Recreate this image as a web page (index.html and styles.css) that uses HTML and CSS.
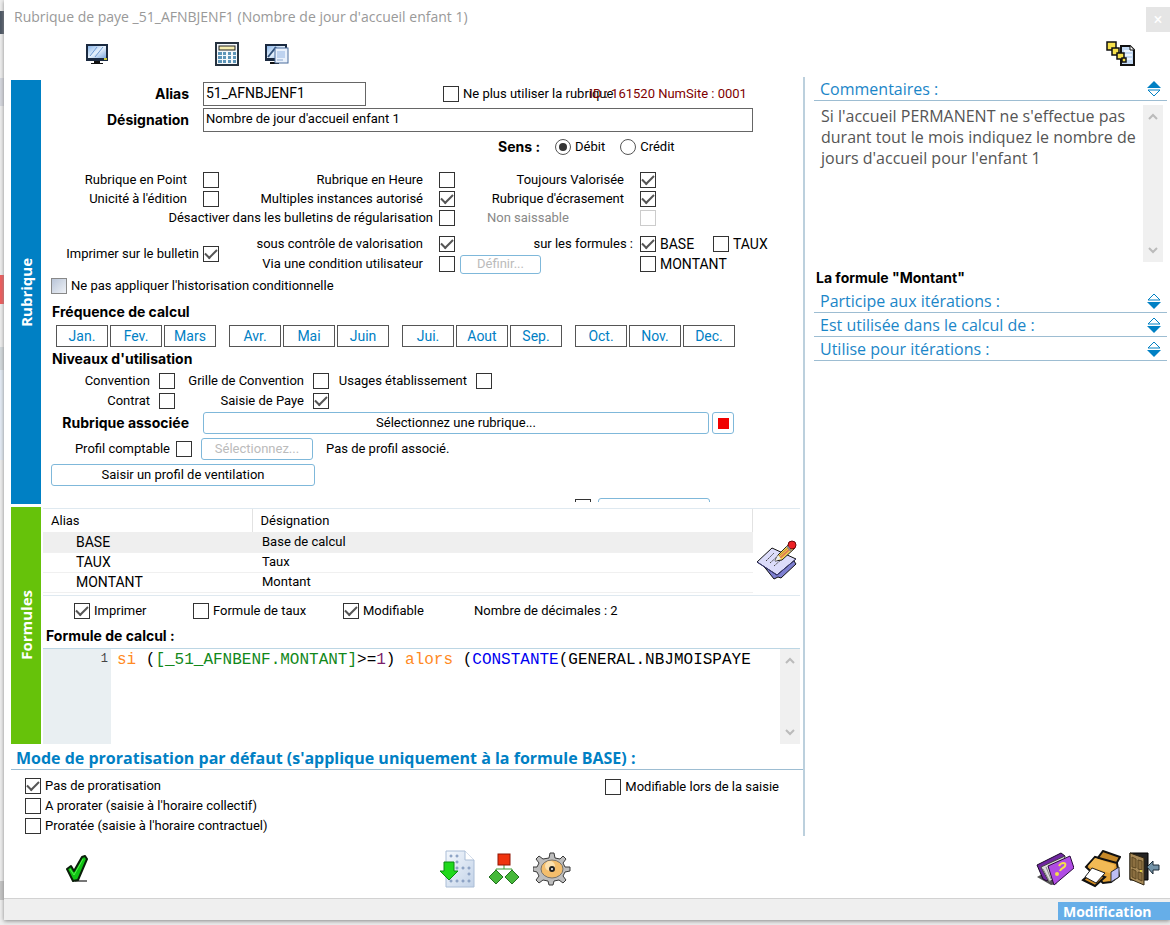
FILE: index.html
```html
<!DOCTYPE html>
<html lang="fr">
<head>
<meta charset="utf-8">
<title>Rubrique de paye</title>
<link rel="stylesheet" href="styles.css">
</head>
<body>
<div class="backdrop"></div>
<div class="window">
  <header class="titlebar">
    <h1 class="title">Rubrique de paye _51_AFNBJENF1 (Nombre de jour d'accueil enfant 1)</h1>
    <button class="close" aria-label="Fermer">×</button>
  </header>

  <nav class="toolbar">
    <button class="icon tool-screen" aria-label="Écran">
      <svg width="24" height="22" viewBox="0 0 24 22"><defs><linearGradient id="scr" x1="0" y1="0" x2="1" y2="1"><stop offset="0" stop-color="#8db8ea"/><stop offset=".5" stop-color="#e6f1fc"/><stop offset="1" stop-color="#7fa9dd"/></linearGradient></defs><rect x="1" y="1" width="22" height="17" fill="#1b2a40"/><rect x="3" y="3" width="18" height="12" fill="url(#scr)"/><path d="M5 13l7-9M10 14l8-10" stroke="#6f9bd2"/><rect x="19" y="15" width="3" height="2" fill="#c8c83c"/><path d="M9 18h6v2h3v1H6v-1h3z" fill="#111"/></svg>
    </button>
    <button class="icon tool-calc" aria-label="Calculatrice">
      <svg width="24" height="24" viewBox="0 0 24 24"><rect x="1" y="1" width="22" height="22" fill="#f4f8fb" stroke="#26323f" stroke-width="2"/><rect x="4" y="4" width="16" height="4" fill="#f6eeb0" stroke="#222" stroke-width="1"/><g fill="#5d95b8"><path d="M3 10h4v3H3zM8 10h3v3H8zM13 10h3v3h-3zM18 10h3v3h-3zM3 14h4v3H3zM8 14h3v3H8zM13 14h3v3h-3zM18 14h3v3h-3zM3 18h4v3H3zM8 18h3v3H8zM13 18h3v3h-3zM18 18h3v3h-3z"/></g></svg>
    </button>
    <button class="icon" aria-label="Écran et document">
      <svg width="26" height="22" viewBox="0 0 26 22"><rect x="1" y="1" width="22" height="17" fill="#1b2a40"/><rect x="3" y="3" width="18" height="12" fill="url(#scr)"/><path d="M4 14l8-10" stroke="#31527c" stroke-width="2"/><path d="M6 19h9v2H6z" fill="#111"/><rect x="11" y="5" width="13" height="15" fill="#e9f1fc" stroke="#4b6c9c"/><path d="M13 8h8v7h-8z" fill="#bed3f0"/><path d="M13 17h6" stroke="#8ca9d0"/></svg>
    </button>
    <button class="icon tool-export" aria-label="Transférer">
      <svg width="30" height="26" viewBox="0 0 30 26"><path d="M15 5h9l4 4v15H15z" fill="#c3d9f3" stroke="#111" stroke-width="2"/><path d="M18 10h8M18 14h8M18 18h8" stroke="#eef6ff" stroke-width="2"/><path d="M24 5v4h4" fill="#fff" stroke="#111"/><g fill="#f7e14c" stroke="#111" stroke-width="1.500"><rect x="1" y="1" width="9" height="8"/><rect x="6" y="7" width="7" height="7"/><rect x="11" y="12" width="7" height="6"/><rect x="16" y="17" width="4" height="4"/></g></svg>
    </button>
  </nav>

  <main class="main">
    <div class="left">
      <section class="section">
        <div class="tab tab-blue"><span>Rubrique</span></div>
        <div class="form">
          <div class="row row-alias">
            <label class="strong caption" for="alias">Alias</label>
            <input class="field alias" id="alias" type="text" value="51_AFNBJENF1">
            <label class="check unused"><input type="checkbox"><span>Ne plus utiliser la rubrique</span></label>
            <span class="ident">ID : 161520 NumSite : 0001</span>
          </div>
          <div class="row row-name">
            <label class="strong caption" for="designation">Désignation</label>
            <input class="field name" id="designation" type="text" value="Nombre de jour d'accueil enfant 1">
          </div>
          <div class="row row-sens">
            <span class="strong">Sens :</span>
            <label class="check"><input type="radio" name="sens" checked><span>Débit</span></label>
            <label class="check"><input type="radio" name="sens"><span>Crédit</span></label>
          </div>

          <div class="options">
            <label for="o1">Rubrique en Point</label><input type="checkbox" id="o1">
            <label for="o2">Rubrique en Heure</label><input type="checkbox" id="o2">
            <label for="o3">Toujours Valorisée</label><input type="checkbox" id="o3" checked>
            <label class="first" for="o4">Unicité à l'édition</label><input type="checkbox" id="o4">
            <label for="o5">Multiples instances autorisé</label><input type="checkbox" id="o5" checked>
            <label for="o6">Rubrique d'écrasement</label><input type="checkbox" id="o6" checked>
            <label class="wide" for="o7">Désactiver dans les bulletins de régularisation</label><input type="checkbox" id="o7">
            <label class="muted" for="o8">Non saissable</label><input type="checkbox" id="o8" disabled>
          </div>

          <div class="options printing">
            <label class="tall near" for="p1">Imprimer sur le bulletin</label><input class="tall" type="checkbox" id="p1" checked>
            <label for="p2">sous contrôle de valorisation</label><input type="checkbox" id="p2" checked>
            <span class="caption-right">sur les formules :</span>
            <div class="bases">
              <label class="check base"><input type="checkbox" checked><span>BASE</span></label>
              <label class="check"><input type="checkbox"><span>TAUX</span></label>
            </div>
            <label for="p3">Via une condition utilisateur</label><input type="checkbox" id="p3">
            <button class="btn define" disabled>Définir...</button>
            <div class="bases"><label class="check"><input type="checkbox"><span>MONTANT</span></label></div>
          </div>

          <div class="row row-histo">
            <label class="check"><input class="tri" type="checkbox"><span>Ne pas appliquer l'historisation conditionnelle</span></label>
          </div>

          <h2 class="strong heading frequency">Fréquence de calcul</h2>
          <div class="months">
            <div class="quarter"><button>Jan.</button><button>Fev.</button><button>Mars</button></div>
            <div class="quarter"><button>Avr.</button><button>Mai</button><button>Juin</button></div>
            <div class="quarter"><button>Jui.</button><button>Aout</button><button>Sep.</button></div>
            <div class="quarter"><button>Oct.</button><button>Nov.</button><button>Dec.</button></div>
          </div>

          <h2 class="strong heading levels-title">Niveaux d'utilisation</h2>
          <div class="levels">
            <label for="n1">Convention</label><input type="checkbox" id="n1">
            <label for="n2">Grille de Convention</label><input type="checkbox" id="n2">
            <label for="n3">Usages établissement</label><input type="checkbox" id="n3">
            <label for="n4">Contrat</label><input type="checkbox" id="n4">
            <label for="n5">Saisie de Paye</label><input type="checkbox" id="n5" checked>
          </div>

          <div class="row row-linked">
            <span class="strong caption">Rubrique associée</span>
            <button class="btn choose">Sélectionnez une rubrique...</button>
            <button class="btn clear" aria-label="Effacer"><i></i></button>
          </div>
          <div class="row row-profile">
            <label class="profile-label" for="pc">Profil comptable</label><input type="checkbox" id="pc">
            <button class="btn pick" disabled>Sélectionnez...</button>
            <span>Pas de profil associé.</span>
          </div>
          <div class="row row-split"><button class="btn split">Saisir un profil de ventilation</button></div>
          <div class="cropped"><input type="checkbox" aria-label="Définir"><button class="btn pick" disabled>Définir...</button></div>
        </div>
      </section>

      <section class="section formulas">
        <div class="tab tab-green"><span>Formules</span></div>
        <div class="formula-body">
          <div class="list">
            <table class="table">
              <thead><tr><th class="col-alias">Alias</th><th>Désignation</th></tr></thead>
              <tbody>
                <tr class="selected"><td>BASE</td><td>Base de calcul</td></tr>
                <tr><td>TAUX</td><td>Taux</td></tr>
                <tr><td>MONTANT</td><td>Montant</td></tr>
              </tbody>
            </table>
            <button class="icon edit" aria-label="Modifier">
              <svg width="42" height="42" viewBox="0 0 42 42"><path d="M6 24l12 15 4-2 3 1 15-14-2-3z" fill="#7d7fd0" stroke="#111"/><path d="M1 22L16 8l24 11-19 16z" fill="#dcdcfa" stroke="#111"/><path d="M1 22l20 13 19-16" fill="none" stroke="#3a3a78"/><path d="M10 21l8-8M14 23l9-8M18 26l9-8" stroke="#444" stroke-dasharray="2 1"/><path d="M19 21l3-6L34 3l5 5-13 12z" fill="#f3d650" stroke="#222"/><path d="M24 18L36 7" stroke="#e08050" stroke-width="2"/><path d="M23 16L35 5" stroke="#ba792a"/><path d="M19 21l3-6 3 4z" fill="#eee"/><circle cx="36" cy="5" r="4" fill="#ed2024" stroke="#6d0808"/><path d="M31 6l4 5" stroke="#8a8a8a" stroke-width="2"/></svg>
            </button>
          </div>
          <div class="flags">
            <label class="check flag-print"><input type="checkbox" checked><span>Imprimer</span></label>
            <label class="check flag-rate"><input type="checkbox"><span>Formule de taux</span></label>
            <label class="check flag-edit"><input type="checkbox" checked><span>Modifiable</span></label>
            <span>Nombre de décimales : 2</span>
          </div>
          <h2 class="strong heading calc-title">Formule de calcul :</h2>
          <div class="editor">
            <div class="gutter">1</div>
            <pre class="code"><span class="kw">si</span> (<span class="ref">[_51_AFNBENF.MONTANT]</span>&gt;=<span class="num">1</span>) <span class="kw">alors</span> (<span class="fn">CONSTANTE</span>(GENERAL.NBJMOISPAYE</pre>
            <div class="scroll"><svg width="10" height="7" viewBox="0 0 10 7"><path d="M1 6l4-4 4 4"/></svg><svg width="10" height="7" viewBox="0 0 10 7"><path d="M1 1l4 4 4-4"/></svg></div>
          </div>
        </div>
      </section>

      <section class="prorata">
        <h2 class="prorata-title">Mode de proratisation par défaut (s'applique uniquement à la formule BASE) :</h2>
        <div class="prorata-body">
          <div class="prorata-list">
            <label class="check"><input type="checkbox" checked><span>Pas de proratisation</span></label>
            <label class="check"><input type="checkbox"><span>A prorater (saisie à l'horaire collectif)</span></label>
            <label class="check"><input type="checkbox"><span>Proratée (saisie à l'horaire contractuel)</span></label>
          </div>
          <label class="check editable"><input type="checkbox"><span>Modifiable lors de la saisie</span></label>
        </div>
      </section>
    </div>

    <aside class="side">
      <h2 class="fold">Commentaires :
        <svg width="14" height="16" viewBox="0 0 14 16"><path d="M0 7l7-7 7 7z" fill="#0080c4"/><path d="M1 9h12l-6 6z" fill="#fff" stroke="#0080c4"/></svg></h2>
      <div class="comment">
        <p>Si l'accueil PERMANENT ne s'effectue pas durant tout le mois indiquez le nombre de jours d'accueil pour l'enfant 1</p>
        <div class="scroll"><svg width="10" height="7" viewBox="0 0 10 7"><path d="M1 6l4-4 4 4"/></svg><svg width="10" height="7" viewBox="0 0 10 7"><path d="M1 1l4 4 4-4"/></svg></div>
      </div>
      <h2 class="strong heading side-title">La formule "Montant"</h2>
      <h3 class="fold">Participe aux itérations :
        <svg width="14" height="16" viewBox="0 0 14 16"><path d="M1 7h12L7 1z" fill="#fff" stroke="#0080c4"/><path d="M0 9l7 7 7-7z" fill="#0080c4"/></svg></h3>
      <h3 class="fold">Est utilisée dans le calcul de :
        <svg width="14" height="16" viewBox="0 0 14 16"><path d="M1 7h12L7 1z" fill="#fff" stroke="#0080c4"/><path d="M0 9l7 7 7-7z" fill="#0080c4"/></svg></h3>
      <h3 class="fold">Utilise pour itérations :
        <svg width="14" height="16" viewBox="0 0 14 16"><path d="M1 7h12L7 1z" fill="#fff" stroke="#0080c4"/><path d="M0 9l7 7 7-7z" fill="#0080c4"/></svg></h3>
    </aside>
  </main>

  <div class="actions">
    <div class="group group-left">
      <button class="icon" aria-label="Valider">
        <svg width="22" height="28" viewBox="0 0 22 28"><path d="M9 26h12" stroke="#777" stroke-width="2"/><path d="M1 14l4-3 3 5L16 2l3-1 2 3-9 21-5 1z" fill="#10c414" stroke="#0a1f0a" stroke-width="2" stroke-linejoin="round"/><path d="M4 14l4 6L17 4" fill="none" stroke="#54ef4c" stroke-width="1"/></svg>
      </button>
    </div>
    <div class="group group-middle">
      <button class="icon" aria-label="Importer">
        <svg width="36" height="38" viewBox="0 0 36 38"><defs><linearGradient id="pg" x1="0" y1="0" x2="1" y2="1"><stop offset="0" stop-color="#f4f8fd"/><stop offset="1" stop-color="#c3d3e8"/></linearGradient></defs><path d="M7 1h19l9 9v27H7z" fill="url(#pg)" stroke="#aabdd6"/><path d="M26 1v9h9" fill="#fff" stroke="#aabdd6"/><g fill="#fff" stroke="#6c88b3"><circle cx="12" cy="6" r="1"/><circle cx="18" cy="6" r="1"/><circle cx="18" cy="12" r="1"/><circle cx="24" cy="18" r="1"/><circle cx="30" cy="18" r="1"/><circle cx="18" cy="18" r="1"/><circle cx="30" cy="24" r="1"/><circle cx="12" cy="31" r="1"/><circle cx="18" cy="31" r="1"/><circle cx="24" cy="31" r="1"/><circle cx="30" cy="31" r="1"/></g><path d="M5 12h10v9h4L10 30 1 21h4z" fill="#1fd91b" stroke="#0c8a10"/></svg>
      </button>
      <button class="icon" aria-label="Arborescence">
        <svg width="30" height="32" viewBox="0 0 30 32"><path d="M15 11v5M7 22v-6h16v6" fill="none" stroke="#3b9c37" stroke-width="1"/><rect x="9" y="1" width="12" height="11" fill="#f0330e" stroke="#8f1605"/><path d="M7 17l7 7-7 7-7-7zM23 17l7 7-7 7-7-7z" fill="#46b83a" stroke="#23701f"/></svg>
      </button>
      <button class="icon" aria-label="Paramètres">
        <svg width="38" height="34" viewBox="0 0 38 34"><g fill="#bdbdbd" stroke="#3a3a3a"><path d="M16 6l1-5h4l1 5 5 1 3-3 3 3-3 4 2 4 5 0v4l-5 1-2 4 3 4-3 3-4-3-5 1-1 4h-4l-1-4-5-1-4 3-3-3 3-4-2-4-4-1v-4l4 0 2-4-3-4 3-3 4 3z"/></g><ellipse cx="19" cy="17" rx="11" ry="9" fill="#f4be6c" stroke="#77726a" stroke-width="1"/><circle cx="17" cy="14" r="5" fill="#fbe0ae"/><circle cx="19" cy="17" r="2" fill="#fff" stroke="#222" stroke-width="2"/></svg>
      </button>
    </div>
    <div class="group group-right">
      <button class="icon" aria-label="Aide">
        <svg width="38" height="34" viewBox="0 0 38 34"><path d="M1 25l7-4 13 11-6 1z" fill="#555"/><path d="M1 13L25 1l4 3-18 25-4-2z" fill="#6f26a0" stroke="#1a0828"/><path d="M5 15L29 4l-3 18-13 8z" fill="#ddd" stroke="#444"/><path d="M7 17l7 13M10 15l5 12" stroke="#888"/><path d="M12 14L34 4l4 12-20 17z" fill="#b04ce4" stroke="#2b0b3d"/><path d="M23 14c2-4 8-4 6 0-1 2-4 2-5 5" fill="none" stroke="#f4e04a" stroke-width="2"/><circle cx="21" cy="22" r="2" fill="#f4e04a"/></svg>
      </button>
      <button class="icon" aria-label="Imprimer">
        <svg width="40" height="38" viewBox="0 0 40 38"><path d="M16 9l6-8 17 6-5 9z" fill="#c58828" stroke="#111" stroke-width="2"/><path d="M5 17l9-10 22 6 2 13-8 6-8 1z" fill="#e5a336" stroke="#111" stroke-width="2"/><path d="M14 8l20 7-3 9-24-8z" fill="#f2ba55"/><path d="M30 22l8-5v10l-8 5z" fill="#bdbdf4" stroke="#333"/><path d="M2 30l12 6 10-9-13-5z" fill="#d28a20" stroke="#111" stroke-width="2"/><path d="M4 27l7-9 13 5-9 10z" fill="#fff" stroke="#222"/></svg>
      </button>
      <button class="icon" aria-label="Quitter">
        <svg width="32" height="36" viewBox="0 0 32 36"><path d="M2 2h18v27H2z" fill="#242424" stroke="#000"/><path d="M2 2l14 5v27L2 28z" fill="#a88a58" stroke="#2f240f"/><path d="M4 6l4 2v9l-4-1zM10 9l4 1v9l-4-1zM4 18l4 2v8l-4-2zM10 21l4 1v8l-4-2z" fill="#8c6f40" stroke="#5d4823"/><circle cx="13" cy="20" r="1" fill="#f2e63a"/><path d="M19 16l6-6v4h6v5h-6v4z" fill="#7393a8" stroke="#1c2b36"/></svg>
      </button>
    </div>
  </div>

  <footer class="status"><span class="mode">Modification</span></footer>
</div>
</body>
</html>
```
FILE: styles.css
```css
* { box-sizing: border-box; }

body {
  margin: 0;
  min-height: 100vh;
  display: grid;
  grid-template-columns: 4px minmax(0, 1fr);
  background: #ececec;
  color: #000;
  font: 13px/18px Roboto, "Liberation Sans", sans-serif;
}

button, input { font: inherit; color: inherit; }
button { padding: 0; cursor: pointer; }
h1, h2, h3, p, pre { margin: 0; font-size: inherit; font-weight: normal; }

.backdrop {
  background: linear-gradient(#eee 0 11px, #4b5563 11px 34px, #eee 34px 78px, #d5d7de 78px 106px, #eee 106px 275px, #f05a5a 275px 304px, #eee 304px 347px, #d3d9dc 347px 370px, #e3ebf5 370px 460px, #eee 460px 881px, #c4c4c4 881px 900px, #eee 900px);
}

.window {
  display: flex;
  flex-direction: column;
  margin-bottom: 6px;
  background: #fff;
  box-shadow: 0 1px 4px #888;
}

.strong { font: 700 14px/18px Inter, Roboto, sans-serif; }

.titlebar { display: flex; justify-content: space-between; height: 38px; }
.title { padding: 6px 0 0 10px; color: #999; font: 14px/22px "Open Sans", sans-serif; }
.close { width: 24px; height: 25px; margin-top: 7px; border: 0; background: #e5e5e5; color: #fff; font-size: 16px; }

.icon { display: block; border: 0; background: none; }
.icon svg { display: block; }
.toolbar { display: flex; align-items: center; height: 39px; padding: 0 34px 8px 81px; }
.tool-calc { margin: 0 25px 0 106px; }
.tool-export { margin-left: auto; }

.main { display: grid; grid-template-columns: minmax(0, 1fr) 365px; flex: 1; }
.left { border-right: 2px solid #bcd0dd; }
.section { display: grid; grid-template-columns: 30px minmax(0, 1fr); margin: 3px 0 0 7px; }
.tab { display: grid; place-items: center; color: #fff; font: 700 15px/20px "Open Sans", sans-serif; }
.tab span { writing-mode: vertical-rl; transform: rotate(180deg); }
.tab-blue { background: #0080c4; }
.tab-green { background: #66c20a; }
.form { padding-left: 1px; }

.row { display: flex; align-items: center; }
.check { display: flex; align-items: center; gap: 4px; white-space: nowrap; }

input[type="checkbox"], input[type="radio"] {
  appearance: none;
  display: grid;
  place-items: center;
  flex: none;
  width: 16px;
  height: 16px;
  margin: 0;
  border: 1px solid #333;
  background: #fff;
}
input[type="checkbox"]:checked::after {
  content: "";
  width: 10px;
  height: 5px;
  margin-bottom: 3px;
  border: solid #555;
  border-width: 0 0 2px 2px;
  transform: rotate(-45deg);
}
input[type="checkbox"]:disabled { border-color: #ccc; }
input[type="radio"] { border-color: #555; border-radius: 50%; }
input[type="radio"]:checked::after { content: ""; width: 8px; height: 8px; border-radius: 50%; background: #333; }
input.tri { border-color: #888; background: linear-gradient(135deg, #b9c5d8, #eef1f6); }

.field { height: 24px; padding: 0 2px 2px; border: 1px solid #666; background: #fff; }
.alias { width: 163px; font-size: 14px; }
.name { width: 550px; }
.caption { width: 147px; margin-right: 14px; text-align: right; }

.row-alias { height: 27px; }
.unused { margin-left: 77px; }
.ident { margin-left: -24px; color: #800000; white-space: nowrap; }
.row-name { height: 25px; }
.row-sens { height: 30px; gap: 15px; padding-left: 456px; }

.options {
  display: grid;
  grid-template-columns: 161px 16px 220px 16px 185px 16px minmax(0, 1fr);
  grid-auto-rows: 19px;
  align-items: center;
  margin-top: 8px;
}
.options > label { padding-right: 16px; text-align: right; white-space: nowrap; }
.options > input:nth-of-type(3n) { grid-column: 6; }
.options > .first { grid-column: 1; }
.options > .wide { grid-column: 1 / 4; padding-right: 6px; }
.options > .muted { grid-column: 5; padding-left: 32px; text-align: left; color: #888; }
.options > #o7 { grid-column: 4; }
.options > #o8 { grid-column: 6; }

.options.printing { grid-auto-rows: 20px; margin-top: 7px; }
.printing > .tall { grid-row: 1 / 3; }
.options > .near { padding-right: 4px; }
.options.printing > input:nth-of-type(3n) { grid-column: 4; }
.caption-right { padding-right: 7px; text-align: right; }
.bases { grid-column: 6 / 8; display: flex; font-size: 14px; }
.base { width: 73px; }

.btn { height: 22px; border: 1px solid #7fb8da; border-radius: 3px; background: #fff; line-height: 18px; }
.btn:disabled { color: #bbb; cursor: default; }
.define { justify-self: start; width: 81px; height: 19px; margin-left: 5px; line-height: 16px; }

.row-histo { height: 24px; padding-left: 9px; }
.heading { padding-left: 10px; }
.frequency { padding-top: 5px; height: 27px; }
.months { display: flex; gap: 13px; padding-left: 14px; font-size: 14px; }
.quarter { display: flex; gap: 2px; }
.quarter button { width: 52px; height: 22px; border: 1px solid #555; background: #fff; color: #0080c4; }
.levels-title { height: 24px; padding-top: 3px; }
.levels {
  display: grid;
  grid-template-columns: 117px 16px 138px 16px 147px 16px;
  grid-auto-rows: 20px;
  align-items: center;
}
.levels label { padding-right: 9px; text-align: right; white-space: nowrap; }

.row-linked { height: 24px; }
.choose { width: 506px; margin-right: 3px; }
.clear { display: grid; place-items: center; width: 22px; }
.clear i { width: 11px; height: 11px; background: #f00000; }
.row-profile { height: 28px; }
.profile-label { width: 128px; margin-right: 6px; text-align: right; }
.pick { width: 112px; margin: 0 13px 0 9px; }
.row-split { height: 24px; padding-left: 9px; }
.split { width: 264px; }
.cropped { display: flex; height: 15px; margin-bottom: 2px; padding: 11px 0 0 533px; overflow: hidden; }
.cropped input { margin-top: 1px; }
.cropped .btn { margin-left: 7px; }

.formula-body { padding: 1px 3px 0 2px; }
.list { display: flex; align-items: center; border: solid #dfe9f0; border-width: 1px 0; padding-bottom: 2px; }
.table { flex: 1; border-collapse: collapse; }
.table th { height: 23px; padding: 0 8px; border-right: 1px solid #e2e2e2; font-weight: normal; text-align: left; }
.table td { height: 20px; padding: 0 0 0 10px; border-bottom: 1px solid #f0f0f0; }
.table td:first-child { padding-left: 33px; font-size: 14px; }
.col-alias { width: 209px; }
.selected { background: #efefef; }
.edit { margin: 20px 2px 0 3px; }

.flags { display: flex; align-items: center; height: 30px; padding-left: 31px; }
.flag-print { width: 119px; }
.flag-rate { width: 150px; }
.flag-edit { width: 131px; }
.calc-title { height: 22px; padding: 1px 0 0 3px; }
.editor { display: grid; grid-template-columns: 68px minmax(0, 1fr) 20px; height: 96px; border-top: 1px solid #bcd6e4; }
.gutter { padding: 1px 3px 0 0; background: #e9eff2; color: #444; text-align: right; font: 12px/18px "Liberation Mono", monospace; }
.code { padding: 1px 0 0 6px; overflow: hidden; font: 16px/20px "Liberation Mono", monospace; }
.kw { color: #ff8a24; }
.ref { color: #12881a; }
.num { color: #7a1f6a; }
.fn { color: #0000f0; }

.scroll { display: flex; flex-direction: column; justify-content: space-between; align-items: center; padding: 8px 0; background: #f0f0f0; }
.scroll path { fill: none; stroke: #bbb; stroke-width: 2; }

.prorata { margin-left: 7px; }
.prorata-title { padding: 3px 5px 0; border-bottom: 1px solid #9dbdd2; color: #0080c4; font: 700 16px/22px "Open Sans", sans-serif; white-space: nowrap; }
.prorata-body { display: flex; justify-content: space-between; padding: 6px 24px 0 14px; }
.prorata-list { display: grid; grid-auto-rows: 20px; }
.editable { height: 22px; }

.side { padding: 0 3px 0 9px; }
.fold {
  display: flex;
  align-items: center;
  justify-content: space-between;
  height: 24px;
  padding: 0 6px;
  border-bottom: 1px solid #9dbdd2;
  color: #1b86c8;
  font: 16px/22px "Open Sans", sans-serif;
}
.comment { display: grid; grid-template-columns: minmax(0, 1fr) 20px; height: 157px; margin: 4px 4px 0 0; }
.comment p { padding: 1px 0 0 7px; color: #555; font: 16px/21px "Open Sans", sans-serif; }
.side-title { height: 27px; padding: 7px 0 0 2px; }

.actions { display: flex; align-items: center; height: 62px; padding: 4px 10px 0 62px; }
.group { display: flex; align-items: center; gap: 14px; }
.group-middle { margin-left: 351px; }
.group-right { gap: 7px; margin-left: auto; }
.status { display: flex; justify-content: flex-end; height: 22px; padding-top: 3px; border-top: 1px solid #d2d2d2; background: #efefef; }
.mode { width: 112px; padding-left: 5px; background: #66aee8; color: #fff; font: 700 14px/20px "Open Sans", sans-serif; }
```
